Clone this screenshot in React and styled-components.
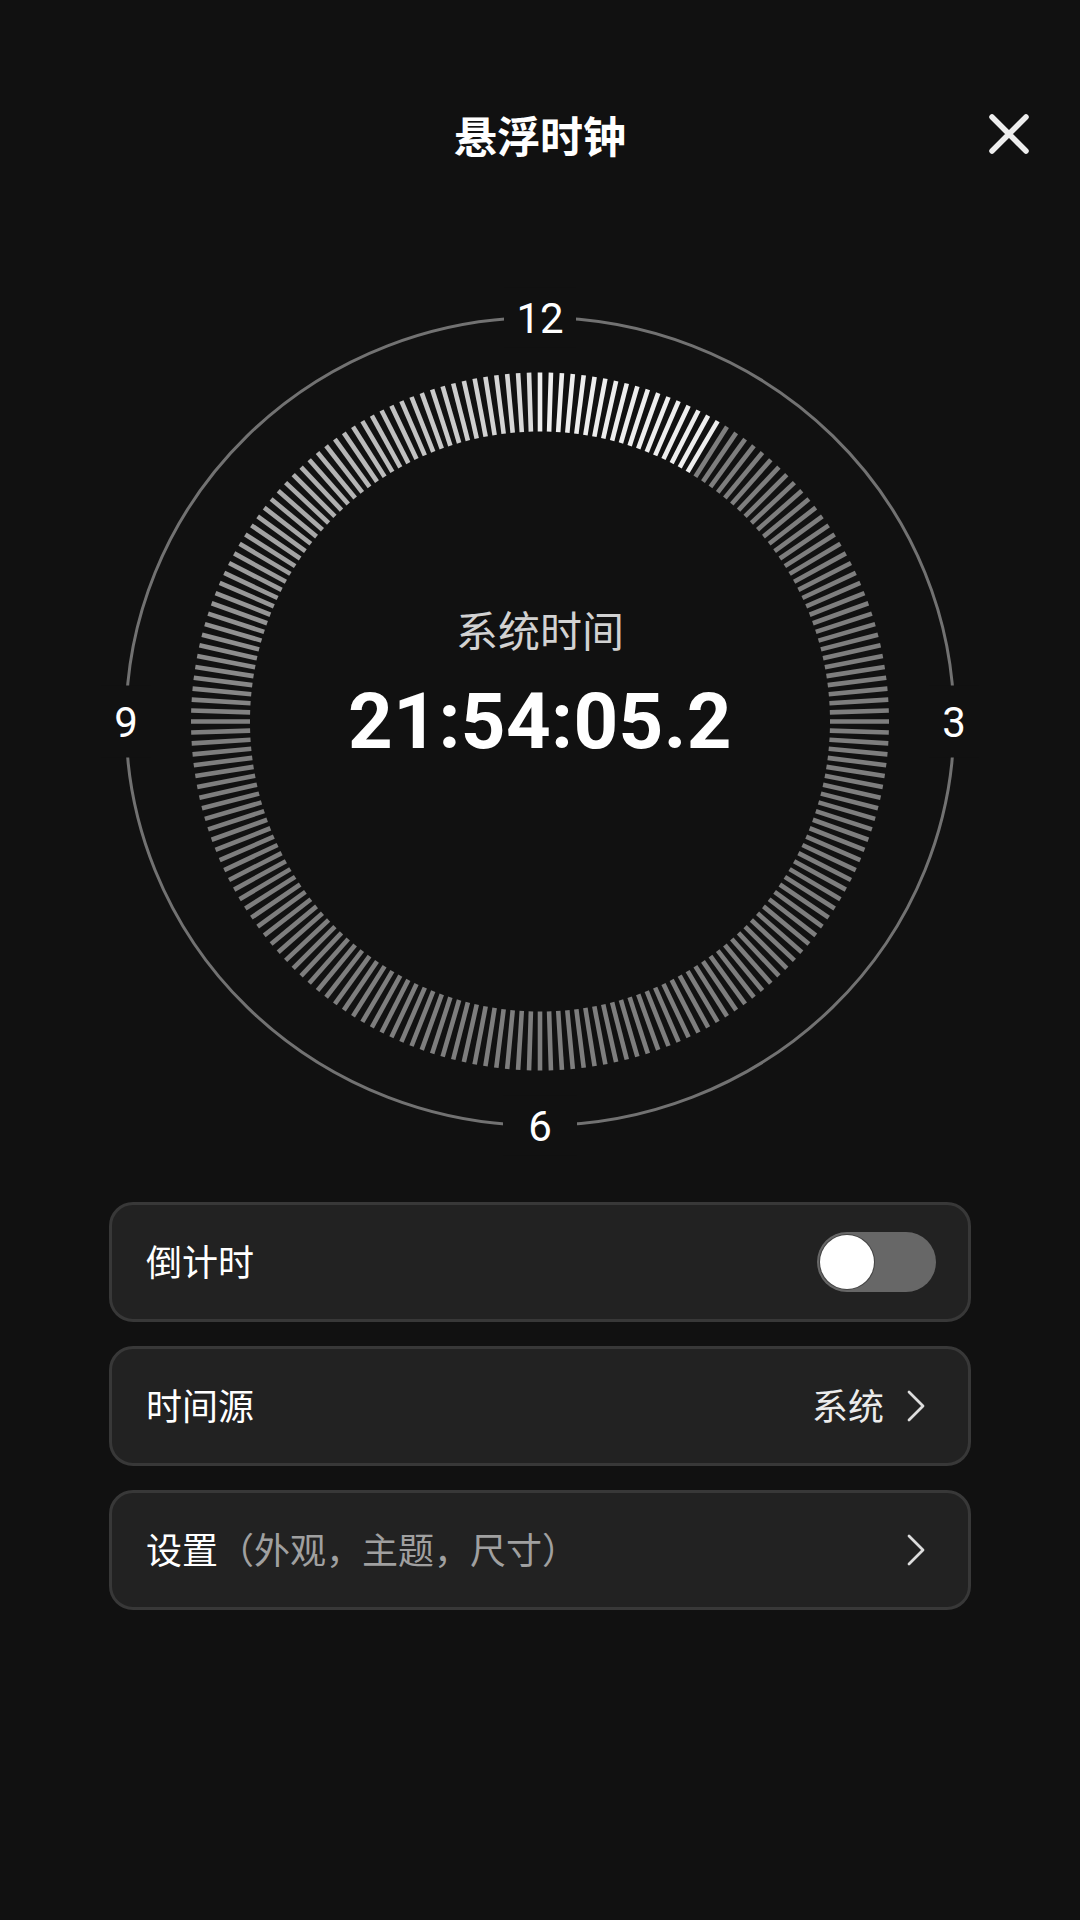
import React from "react"
import styled, { createGlobalStyle } from "styled-components"

const GlobalStyle = createGlobalStyle`
  html, body {
    margin: 0;
    padding: 0;
    background: #111111;
  }
  body {
    font-family: "Noto Sans CJK SC", "Noto Sans", sans-serif;
    color: #ffffff;
  }
`

const Page = styled.div`
  width: 1080px;
  min-height: 1920px;
  background: #111111;
  display: flex;
  flex-direction: column;
`

const Header = styled.header`
  display: grid;
  grid-template-columns: 1fr auto 1fr;
  align-items: center;
  height: 80px;
  margin-top: 94px;
  padding: 0 51px;
`

const Title = styled.h1`
  grid-column: 2;
  margin: 0;
  font-size: 43px;
  font-weight: 700;
  line-height: 1;
  color: #ffffff;
`

const CloseButton = styled.button`
  grid-column: 3;
  justify-self: end;
  width: 40px;
  height: 40px;
  padding: 0;
  border: none;
  background: none;
  display: flex;
  align-items: center;
  justify-content: center;
`

const Dial = styled.div`
  position: relative;
  width: 1080px;
  height: 890px;
  margin-top: 106px;
`

const DialFace = styled.svg`
  display: block;
`

const DialCenter = styled.div`
  position: absolute;
  left: 0;
  right: 0;
  top: 324px;
  display: flex;
  flex-direction: column;
  align-items: center;
  gap: 28px;
`

const SourceLabel = styled.div`
  font-size: 42px;
  line-height: 50px;
  color: #d2d2d2;
`

const TimeText = styled.div`
  font-family: Roboto, "Noto Sans", sans-serif;
  font-size: 78px;
  font-weight: 700;
  line-height: 80px;
  letter-spacing: 0.4px;
  color: #ffffff;
`

const Cards = styled.div`
  display: flex;
  flex-direction: column;
  gap: 24px;
  padding: 0 109px;
  margin-top: 32px;
`

const Card = styled.div`
  height: 120px;
  box-sizing: border-box;
  border: 3px solid #383838;
  border-radius: 24px;
  background: #222222;
  display: flex;
  align-items: center;
  justify-content: space-between;
  padding: 0 ${(p) => (p.$toggle ? "32px" : "42px")} 0 34px;
`

const Label = styled.span`
  font-size: 36px;
  line-height: 1;
  padding-bottom: 5px;
  color: #ffffff;
`

const Hint = styled.span`
  color: #a0a0a0;
`

const Trailing = styled.div`
  display: flex;
  align-items: center;
  gap: 22px;
  font-size: 36px;
  line-height: 1;
  color: #ececec;
`

const TrailingText = styled.span`
  padding-bottom: 5px;
`

const Track = styled.div`
  width: 119px;
  height: 60px;
  border-radius: 30px;
  background: #676767;
  display: flex;
  align-items: center;
  padding: 0 3px;
  box-sizing: border-box;
`

const Knob = styled.div`
  width: 54px;
  height: 54px;
  border-radius: 50%;
  background: #ffffff;
  box-shadow: 0 0 0 1px rgba(0, 0, 0, 0.35);
`

const CX = 540
const CY = 441.5
const TICKS = 200
const SECONDS = 5.2

function mix(a, b, t) {
  const v = Math.round(a + (b - a) * t)
  return `rgb(${v},${v},${v})`
}

function tickColor(deg) {
  const now = (SECONDS / 60) * 360
  if (deg <= now + 0.01) return "#eeeeee"
  if (deg >= 270) return mix(0x80, 0xdc, (deg - 270) / 90)
  return "#7e7e7e"
}

const Ticks = () => {
  const items = []
  for (let i = 0; i < TICKS; i++) {
    const deg = (i * 360) / TICKS
    const a = (deg * Math.PI) / 180
    const s = Math.sin(a)
    const c = Math.cos(a)
    items.push(
      <line
        key={i}
        x1={CX + 290 * s}
        y1={CY - 290 * c}
        x2={CX + 349 * s}
        y2={CY - 349 * c}
        stroke={tickColor(deg)}
        strokeWidth="4.6"
      />
    )
  }
  return <g>{items}</g>
}

const hours = [
  { n: "12", x: CX, y: CY - 404, w: 72, h: 60 },
  { n: "3", x: CX + 414, y: CY, w: 50, h: 72 },
  { n: "6", x: CX, y: CY + 404, w: 74, h: 60 },
  { n: "9", x: CX - 414, y: CY, w: 50, h: 72 },
]

const ClockDial = () => (
  <Dial>
    <DialFace width="1080" height="890" viewBox="0 0 1080 890">
      <ellipse cx={CX} cy={CY} rx="414" ry="404" fill="none" stroke="#727272" strokeWidth="3" />
      {hours.map((h) => (
        <g key={h.n}>
          <rect x={h.x - h.w / 2} y={h.y - h.h / 2} width={h.w} height={h.h} fill="#111111" />
          <text
            x={h.x}
            y={h.y + 15}
            textAnchor="middle"
            fontFamily="Roboto, 'Noto Sans', sans-serif"
            fontSize="42"
            fill="#ffffff"
          >
            {h.n}
          </text>
        </g>
      ))}
      <Ticks />
    </DialFace>
    <DialCenter>
      <SourceLabel>系统时间</SourceLabel>
      <TimeText>21:54:05.2</TimeText>
    </DialCenter>
  </Dial>
)

const Chevron = () => (
  <svg width="20" height="32" viewBox="0 0 20 32">
    <polyline points="3,2 17,16 3,30" fill="none" stroke="#dddddd" strokeWidth="2.8" strokeLinecap="round" strokeLinejoin="round" />
  </svg>
)

export default function App() {
  return (
    <Page>
      <GlobalStyle />
      <Header>
        <Title>悬浮时钟</Title>
        <CloseButton aria-label="关闭">
          <svg width="40" height="40" viewBox="0 0 40 40">
            <path d="M3 3 L37 37 M37 3 L3 37" stroke="#eeeeee" strokeWidth="5.5" strokeLinecap="round" />
          </svg>
        </CloseButton>
      </Header>
      <ClockDial />
      <Cards>
        <Card $toggle>
          <Label>倒计时</Label>
          <Track>
            <Knob />
          </Track>
        </Card>
        <Card>
          <Label>时间源</Label>
          <Trailing>
            <TrailingText>系统</TrailingText>
            <Chevron />
          </Trailing>
        </Card>
        <Card>
          <Label>
            设置<Hint>（外观，主题，尺寸）</Hint>
          </Label>
          <Chevron />
        </Card>
      </Cards>
    </Page>
  )
}
